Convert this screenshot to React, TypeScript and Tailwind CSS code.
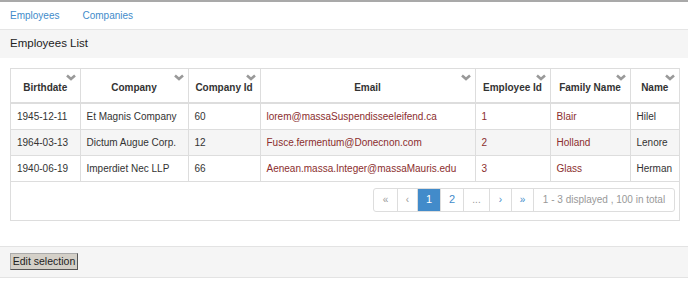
import { ReactNode } from "react"

const columns = [
    { label: "Birthdate", w: "w-[69px]" },
    { label: "Company", w: "w-[108px]" },
    { label: "Company Id", w: "w-[72px]" },
    { label: "Email", w: "w-[215px]" },
    { label: "Employee Id", w: "w-[75px]" },
    { label: "Family Name", w: "w-[80px]" },
    { label: "Name", w: "w-[49px]" },
]

const employees = [
    { birthdate: "1945-12-11", company: "Et Magnis Company", companyId: "60", email: "lorem@massaSuspendisseeleifend.ca", id: "1", family: "Blair", name: "Hilel" },
    { birthdate: "1964-03-13", company: "Dictum Augue Corp.", companyId: "12", email: "Fusce.fermentum@Donecnon.com", id: "2", family: "Holland", name: "Lenore" },
    { birthdate: "1940-06-19", company: "Imperdiet Nec LLP", companyId: "66", email: "Aenean.massa.Integer@massaMauris.edu", id: "3", family: "Glass", name: "Herman" },
]

function Chevron() {
    return (
        <svg className="absolute top-[5px] right-[4px]" width="10" height="7" viewBox="0 0 10 7">
            <path d="M1 1.5 L5 5 L9 1.5" fill="none" stroke="#999" strokeWidth="2.6" />
        </svg>
    )
}

function PageItem({ children, active, muted, w }: { children: ReactNode; active?: boolean; muted?: boolean; w: string }) {
    return (
        <div
            className={`${w} h-full flex items-center justify-center border-r border-[#ddd] last:border-r-0 ${
                active ? "bg-[#428bca] text-white" : muted ? "text-[#999]" : "text-[#428bca]"
            }`}
        >
            {children}
        </div>
    )
}

export default function App() {
    const red = "text-[#8b2e2e]"
    return (
        <div className="w-[688px] h-[284px] bg-white border-t-2 border-[#a9a9a9] text-[10px] text-[#333] overflow-hidden" style={{ fontFamily: '"Liberation Sans", Arial, sans-serif' }}>
            <div className="flex gap-[23px] pl-[10px] h-[27px] items-center text-[#428bca] text-[10px]">
                <span>Employees</span>
                <span>Companies</span>
            </div>

            <div className="h-[29px] bg-[#f5f5f5] border-t border-[#e5e5e5] flex items-center pl-[10px] text-[11.5px] text-[#222]">
                Employees List
            </div>

            <div className="pl-[10px] pr-[8px] pt-[10px]">
                <div className="border border-[#ddd]">
                    <table className="w-full border-collapse table-fixed">
                        <thead>
                            <tr className="h-[34px]">
                                {columns.map((c, i) => (
                                    <th key={c.label} className={`${c.w} relative font-bold text-center align-bottom pb-[7px] border-b-2 border-[#ddd] ${i > 0 ? "border-l border-l-[#ddd]" : ""}`}>
                                        <Chevron />
                                        {c.label}
                                    </th>
                                ))}
                            </tr>
                        </thead>
                        <tbody>
                            {employees.map((e, r) => (
                                <tr key={e.id} className={`h-[26px] ${r === 1 ? "bg-[#f5f5f5]" : ""}`}>
                                    <td className="px-[6px] border-b border-[#ddd]">{e.birthdate}</td>
                                    <td className="px-[6px] border-b border-l border-[#ddd]">{e.company}</td>
                                    <td className="px-[6px] border-b border-l border-[#ddd]">{e.companyId}</td>
                                    <td className={`px-[6px] border-b border-l border-[#ddd] ${red}`}>{e.email}</td>
                                    <td className={`px-[6px] border-b border-l border-[#ddd] ${red}`}>{e.id}</td>
                                    <td className={`px-[6px] border-b border-l border-[#ddd] ${red}`}>{e.family}</td>
                                    <td className="px-[6px] border-b border-l border-[#ddd]">{e.name}</td>
                                </tr>
                            ))}
                        </tbody>
                    </table>
                    <div className="flex justify-end pr-[4px] pt-[6px] pb-[8px]">
                        <div className="flex h-[24px] border border-[#ddd] rounded-[3px] overflow-hidden">
                            <PageItem w="w-[24px]" muted>«</PageItem>
                            <PageItem w="w-[20px]" muted>‹</PageItem>
                            <PageItem w="w-[23px]" active><span className="text-[11px]">1</span></PageItem>
                            <PageItem w="w-[23px]"><span className="text-[11px]">2</span></PageItem>
                            <PageItem w="w-[26px]" muted>...</PageItem>
                            <PageItem w="w-[22px]">›</PageItem>
                            <PageItem w="w-[22px]">»</PageItem>
                            <PageItem w="w-[140px]" muted>1 - 3 displayed , 100 in total</PageItem>
                        </div>
                    </div>
                </div>
            </div>

            <div className="mt-[25px] h-[32px] bg-[#f5f5f5] border-y border-[#e3e3e3] flex items-center pl-[10px]">
                <button className="h-[17px] w-[68px] bg-[#d4d0c8] border border-[#aaa] border-r-[#555] border-b-[#555] text-[10.5px] leading-none text-[#222]">
                    Edit selection
                </button>
            </div>
        </div>
    )
}
